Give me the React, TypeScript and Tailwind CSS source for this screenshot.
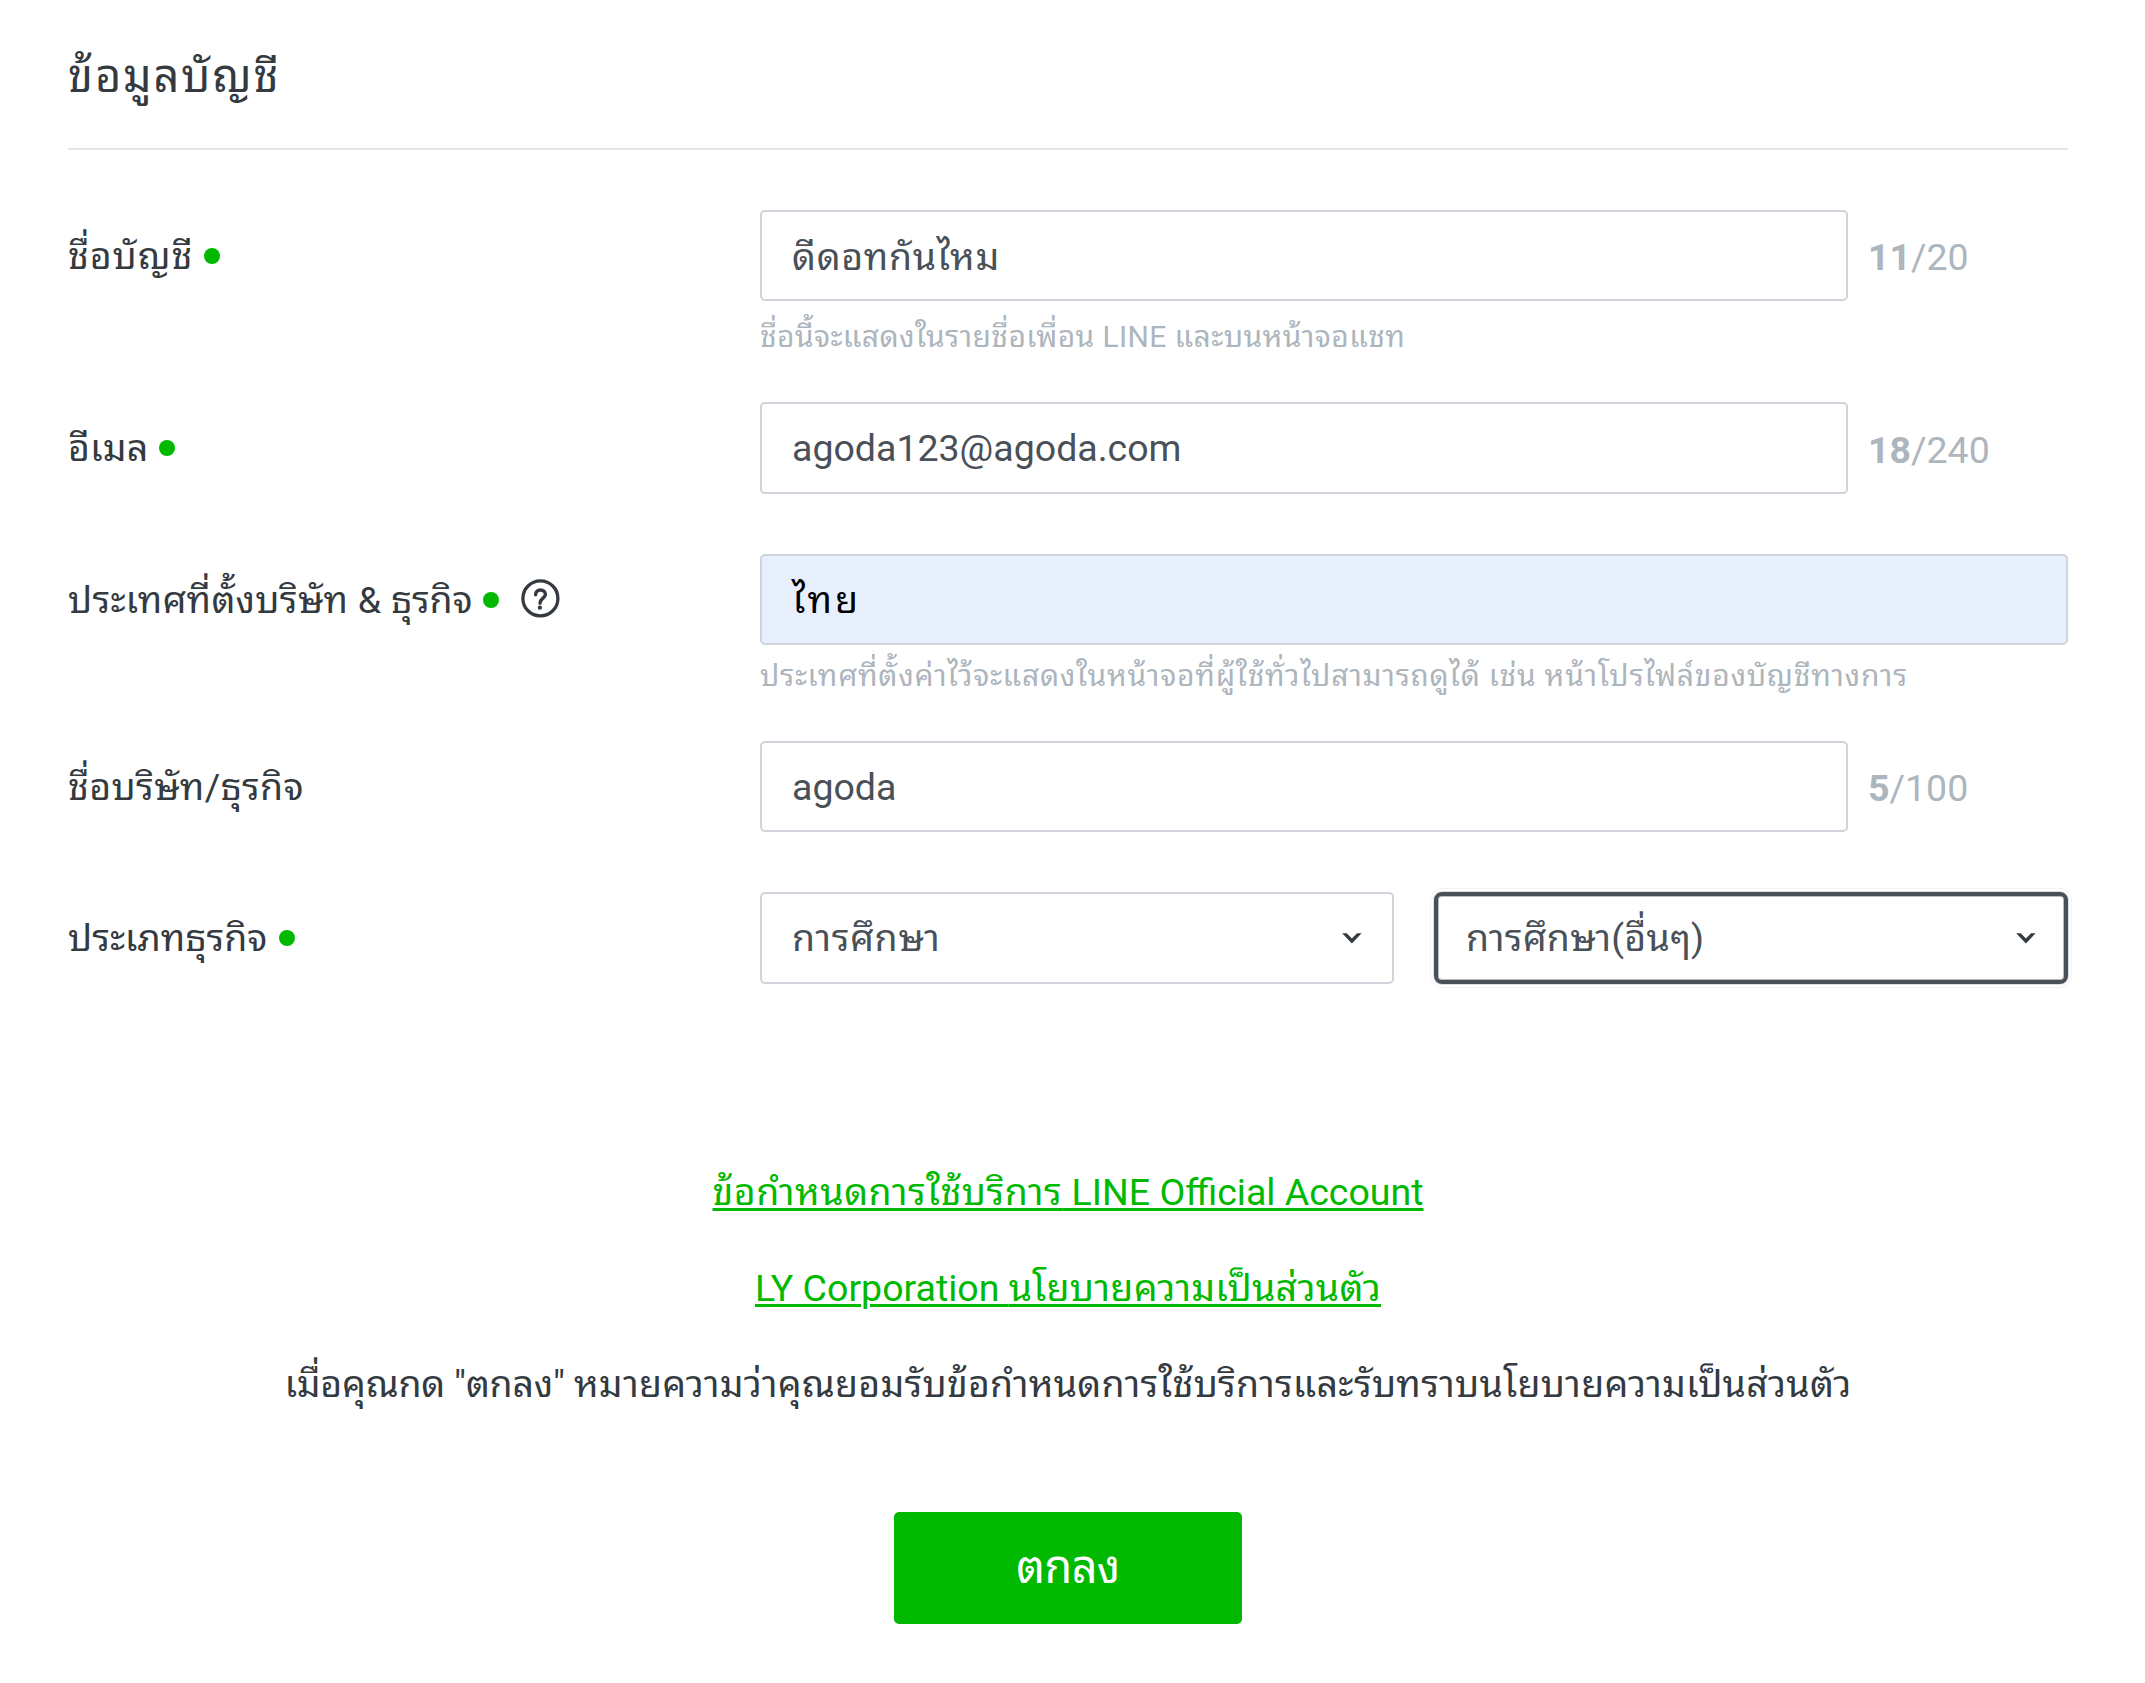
import type { ReactNode } from "react";

function RequiredDot() {
  return <span className="ml-[11px] size-4 shrink-0 rounded-full bg-[#00b900]" />;
}

function HelpIcon() {
  return (
    <svg className="-mt-[3px] ml-[22px] size-[39px] shrink-0" viewBox="0 0 39 39" fill="none">
      <circle cx="19.4" cy="19.4" r="17.5" stroke="#343a40" strokeWidth="3.3" />
      <path
        d="M14.6 15.8C14.6 12.8 16.6 11 19.4 11C22.4 11 24.4 12.9 24.4 15.4C24.4 18.9 19 19.6 19 24.2"
        stroke="#343a40"
        strokeWidth="3.4"
        strokeLinecap="round"
      />
      <circle cx="18.9" cy="28.7" r="2.1" fill="#343a40" />
    </svg>
  );
}

function Chevron() {
  return (
    <svg className="h-[11px] w-5 shrink-0" viewBox="0 0 20 11">
      <path d="M0.2 0.3H4.7L9.9 5.6L15.1 0.3H19.6L9.9 10.5Z" fill="#343a40" />
    </svg>
  );
}

function Row({ label, children, className }: { label: ReactNode; children: ReactNode; className?: string }) {
  return (
    <div className={`flex items-start ${className ?? ""}`}>
      <div className="flex h-[91px] w-[692px] shrink-0 items-center text-[#343a40]">{label}</div>
      <div className="w-[1308px]">{children}</div>
    </div>
  );
}

function Counter({ count, max }: { count: number; max: number }) {
  return (
    <span className="ml-5 pt-[3px] text-[#adb5bd]">
      <b className="font-bold">{count}</b>/{max}
    </span>
  );
}

export default function App() {
  return (
    <main className="h-[1683px] w-[2145px] overflow-hidden bg-white pt-[47px] pl-[68px] font-['Roboto','Noto_Sans_Thai_Looped',sans-serif] text-[37.5px] leading-[56px]">
      <div className="w-[2000px]">
        <h1 className="border-b-2 border-[#e5e6e8] pb-[41px] text-[45px] leading-[60px] tracking-[1.9px] text-[#343a40]">
          ข้อมูลบัญชี
        </h1>

        <Row
          className="mt-[60px]"
          label={
            <>
              <span className="tracking-[0.9px]">ชื่อบัญชี</span>
              <RequiredDot />
            </>
          }
        >
          <div className="flex items-center">
            <div className="flex h-[91px] w-[1088px] items-center rounded-[5px] border-2 border-[#ced4da] px-[30px] pt-[3px] tracking-[0.67px] text-[#495057]">
              ดีดอทกันไหม
            </div>
            <Counter count={11} max={20} />
          </div>
          <p className="mt-[18px] text-[30px] leading-9 tracking-[0.38px] text-[#adb5bd]">
            ชื่อนี้จะแสดงในรายชื่อเพื่อน LINE และบนหน้าจอแชท
          </p>
        </Row>

        <Row
          className="mt-[47px]"
          label={
            <>
              <span className="tracking-[0.15px]">อีเมล</span>
              <RequiredDot />
            </>
          }
        >
          <div className="flex items-center">
            <div className="flex h-[92px] w-[1088px] items-center rounded-[5px] border-2 border-[#ced4da] px-[30px] text-[#495057]">
              agoda123@agoda.com
            </div>
            <Counter count={18} max={240} />
          </div>
        </Row>

        <Row
          className="mt-[60px]"
          label={
            <>
              <span className="whitespace-pre">
                <span className="tracking-[0.27px]">ประเทศที่ตั้งบริษัท &amp; </span>
                <span className="tracking-[-0.2px]">ธุรกิจ</span>
              </span>
              <RequiredDot />
              <HelpIcon />
            </>
          }
        >
          <div className="flex h-[91px] items-center rounded-[5px] border-2 border-[#ced4da] bg-[#e8f0fe] px-[30px] tracking-[3px] text-black">
            ไทย
          </div>
          <p className="mt-[13px] text-[30px] leading-9 tracking-[0.73px] whitespace-nowrap text-[#adb5bd]">
            ประเทศที่ตั้งค่าไว้จะแสดงในหน้าจอที่ผู้ใช้ทั่วไปสามารถดูได้ เช่น หน้าโปรไฟล์ของบัญชีทางการ
          </p>
        </Row>

        <Row className="mt-[47px]" label={<span className="tracking-[0.35px]">ชื่อบริษัท/ธุรกิจ</span>}>
          <div className="flex items-center">
            <div className="flex h-[91px] w-[1088px] items-center rounded-[5px] border-2 border-[#ced4da] px-[30px] text-[#495057]">
              agoda
            </div>
            <Counter count={5} max={100} />
          </div>
        </Row>

        <Row
          className="mt-[60px]"
          label={
            <>
              <span>ประเภทธุรกิจ</span>
              <RequiredDot />
            </>
          }
        >
          <div className="flex gap-10">
            <div className="flex h-[92px] w-[634px] items-center justify-between rounded-[5px] border-2 border-[#ced4da] px-[30px] text-[#495057]">
              <span className="tracking-[0.65px]">การศึกษา</span>
              <Chevron />
            </div>
            <div className="flex h-[92px] w-[634px] items-center justify-between rounded-[8px] border-4 border-[#495057] px-7 text-[#495057] shadow-[inset_0_0_0_1px_#b9bdc0,0_0_0_1px_#dcdee0,0_0_0_3px_#fff,0_0_0_4px_#f3f3f4]">
              <span className="tracking-[0.2px]">การศึกษา(อื่นๆ)</span>
              <Chevron />
            </div>
          </div>
        </Row>

        <div className="mt-[180px] flex flex-col items-center gap-10 whitespace-nowrap">
          <a className="text-[#00b900] underline decoration-[3px] underline-offset-[3px]">
            <span className="tracking-[0.48px]">ข้อกำหนดการใช้บริการ</span> LINE Official Account
          </a>
          <a className="text-[#00b900] underline decoration-[3px] underline-offset-[3px]">
            LY Corporation <span className="tracking-[0.26px]">นโยบายความเป็นส่วนตัว</span>
          </a>
          <p className="whitespace-pre text-[#343a40]">
            <span className="tracking-[-0.23px]">เมื่อคุณกด "ตกลง" </span>
            <span className="tracking-[0.24px]">
              หมายความว่าคุณยอมรับข้อกำหนดการใช้บริการและรับทราบนโยบายความเป็นส่วนตัว
            </span>
          </p>
        </div>

        <button className="mx-auto mt-[100px] flex h-28 w-[348px] items-center justify-center rounded-[5px] bg-[#00b900] text-[45px] leading-[60px] tracking-[-0.6px] text-white">
          ตกลง
        </button>
      </div>
    </main>
  );
}
